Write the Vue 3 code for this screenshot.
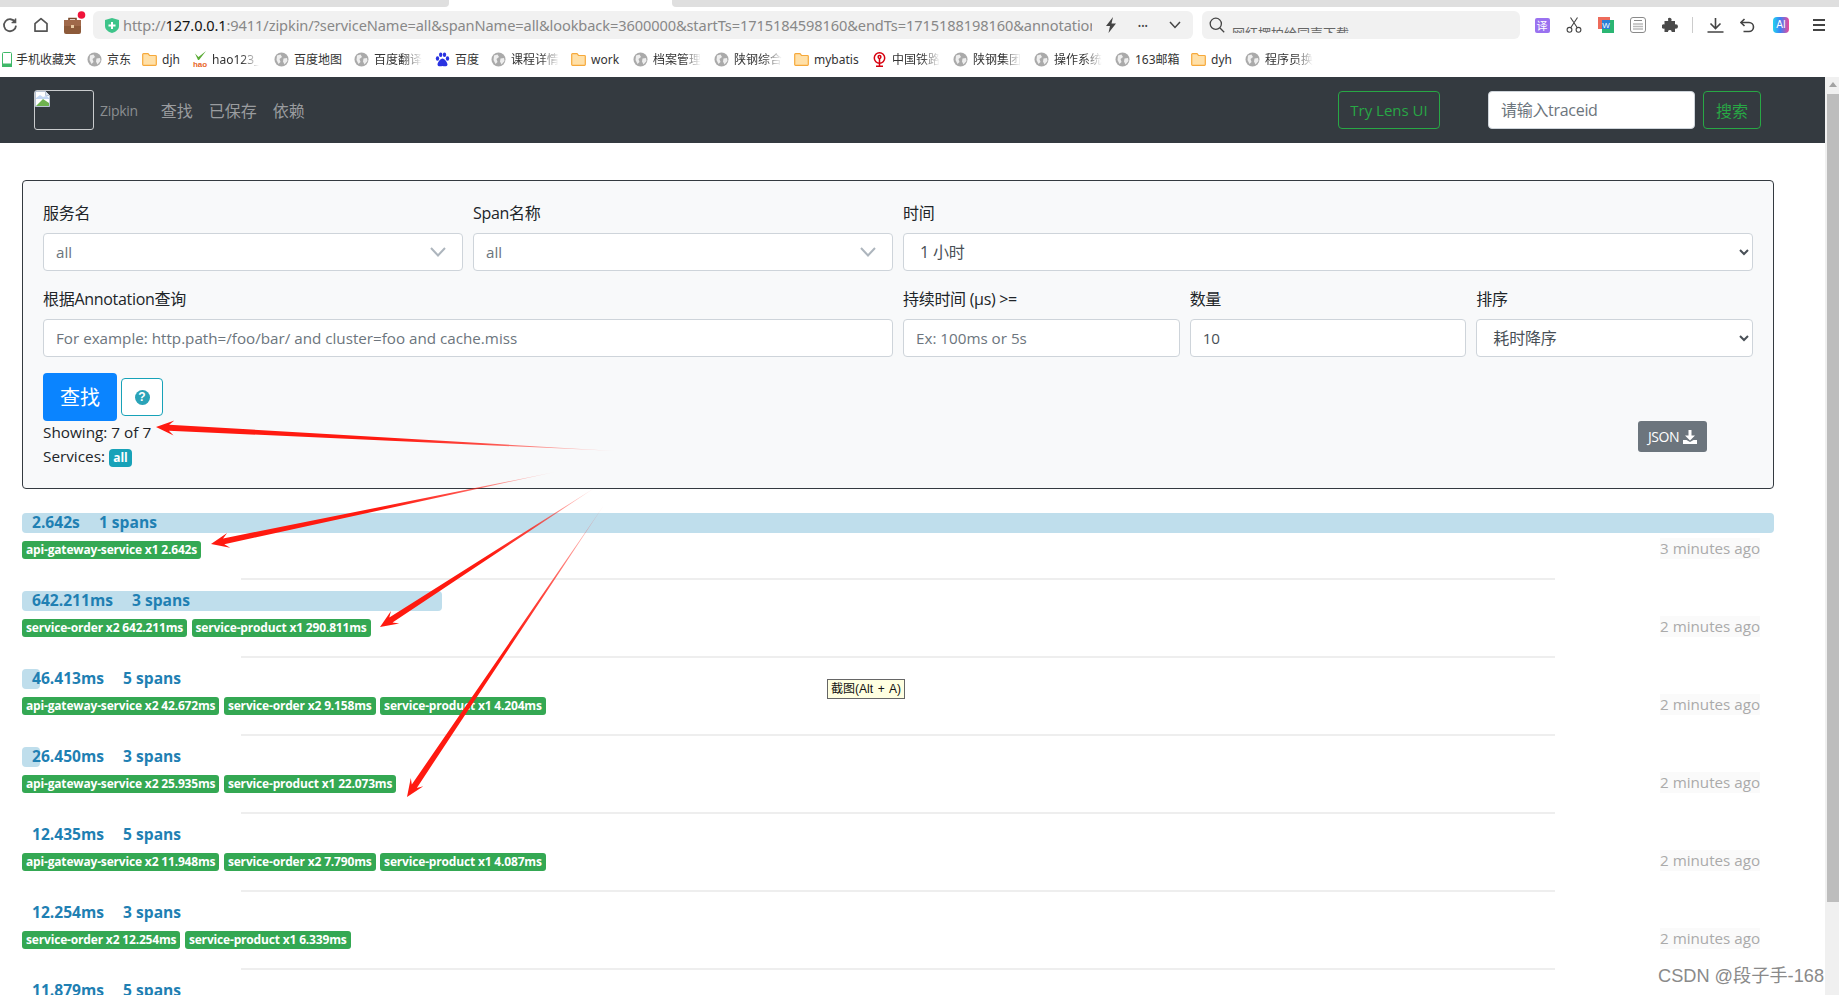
<script setup>
const bookmarks = [
  { icon: 'phone', text: '手机收藏夹', w: 85 },
  { icon: 'globe', text: '京东', w: 55 },
  { icon: 'folder', text: 'djh', w: 50 },
  { icon: 'hao', text: 'hao123_', w: 82, fade: true },
  { icon: 'globe', text: '百度地图', w: 80 },
  { icon: 'globe', text: '百度翻译', w: 81, fade: true },
  { icon: 'paw', text: '百度', w: 56 },
  { icon: 'globe', text: '课程详情', w: 80, fade: true },
  { icon: 'folder', text: 'work', w: 62 },
  { icon: 'globe', text: '档案管理', w: 81, fade: true },
  { icon: 'globe', text: '陕钢综合', w: 80, fade: true },
  { icon: 'folder', text: 'mybatis', w: 78 },
  { icon: 'rail', text: '中国铁路', w: 81, fade: true },
  { icon: 'globe', text: '陕钢集团', w: 81, fade: true },
  { icon: 'globe', text: '操作系统', w: 81, fade: true },
  { icon: 'globe', text: '163邮箱', w: 76 },
  { icon: 'folder', text: 'dyh', w: 54 },
  { icon: 'globe', text: '程序员换', w: 81, fade: true }
]

const traces = [
  { dur: '2.642s', spans: '1 spans', width: 100, ago: '3 minutes ago', tags: ['api-gateway-service x1 2.642s'] },
  { dur: '642.211ms', spans: '3 spans', width: 24, ago: '2 minutes ago', tags: ['service-order x2 642.211ms', 'service-product x1 290.811ms'] },
  { dur: '46.413ms', spans: '5 spans', width: 1, ago: '2 minutes ago', tags: ['api-gateway-service x2 42.672ms', 'service-order x2 9.158ms', 'service-product x1 4.204ms'] },
  { dur: '26.450ms', spans: '3 spans', width: 1, ago: '2 minutes ago', tags: ['api-gateway-service x2 25.935ms', 'service-product x1 22.073ms'] },
  { dur: '12.435ms', spans: '5 spans', width: 0, ago: '2 minutes ago', tags: ['api-gateway-service x2 11.948ms', 'service-order x2 7.790ms', 'service-product x1 4.087ms'] },
  { dur: '12.254ms', spans: '3 spans', width: 0, ago: '2 minutes ago', tags: ['service-order x2 12.254ms', 'service-product x1 6.339ms'] },
  { dur: '11.879ms', spans: '5 spans', width: 0, ago: '2 minutes ago', tags: [] }
]

function arrow(id, tx, ty, hx, hy) {
  const dx = hx - tx
  const dy = hy - ty
  const len = Math.hypot(dx, dy)
  const ux = dx / len
  const uy = dy / len
  const px = -uy
  const py = ux
  const at = (back, side) => `${(hx - ux * back + px * side).toFixed(1)},${(hy - uy * back + py * side).toFixed(1)}`
  return {
    id,
    tx, ty, hx, hy,
    points: [`${tx},${ty}`, at(13, -3), at(18, -7.5), `${hx},${hy}`, at(18, 7.5), at(13, 3)].join(' ')
  }
}

const arrows = [
  arrow('a1', 616, 451, 156, 427),
  arrow('a2', 555, 472, 211, 544),
  arrow('a3', 596, 487, 380, 627),
  arrow('a4', 604, 505, 407, 797)
]
</script>

<template>
  <div class="screen">
    <div class="tabstrip">
      <div class="tab-off tab-left"></div>
      <div class="tab-on"></div>
      <div class="tab-off tab-right"></div>
    </div>

    <div class="toolbar">
      <span class="tool t-reload">
        <svg width="16" height="16" viewBox="0 0 16 16" fill="none" stroke="#555" stroke-width="1.8"><path d="M13.2 5.2A6 6 0 1 0 14 8.6"/><path d="M13.6 1.6v4h-4" stroke-width="1.4" fill="#555"/></svg>
      </span>
      <span class="tool t-home">
        <svg width="16" height="16" viewBox="0 0 16 16" fill="none" stroke="#555" stroke-width="1.7" stroke-linejoin="round"><path d="M8 1.6 14 6.6V14.2H2V6.6Z"/></svg>
      </span>
      <span class="tool t-bag">
        <svg width="24" height="28" viewBox="0 0 24 28"><path d="M6 11V8.5h7V11" fill="none" stroke="#7b4a2c" stroke-width="1.6"/><rect x="1" y="10" width="17" height="14" rx="2" fill="#8d5a3a"/><rect x="1" y="10" width="17" height="6" fill="#a0694a"/><rect x="8" y="15" width="3" height="3" fill="#e9c9a2"/><circle cx="18.5" cy="5" r="3.8" fill="#f0133a"/></svg>
      </span>
      <div class="urlbar">
        <svg class="shield" width="14" height="15" viewBox="0 0 14 15"><path d="M7 0 14 2v6c0 3.5-3 5.800-7 7-4-1.200-7-3.500-7-7V2Z" fill="#3ec48a"/><path d="M7 4v7M3.500 7.500h7" stroke="#fff" stroke-width="2"/></svg>
        <div class="url"><span class="url-dim">http://</span><span class="url-host">127.0.0.1</span><span class="url-dim">:9411/zipkin/?serviceName=all&amp;spanName=all&amp;lookback=3600000&amp;startTs=1715184598160&amp;endTs=1715188198160&amp;annotatior</span></div>
        <svg class="bolt" width="12" height="16" viewBox="0 0 12 16"><path d="M8 0 1 9h4L3.500 16 11 6.500H6.500Z" fill="#444"/></svg>
        <span class="dots">•••</span>
        <svg class="caret" width="12" height="8" viewBox="0 0 12 8" fill="none" stroke="#444" stroke-width="1.500"><path d="M1 1l5 5.500L11 1"/></svg>
      </div>
      <div class="searchbar">
        <svg width="16" height="16" viewBox="0 0 16 16" fill="none" stroke="#444" stroke-width="1.300"><circle cx="6.800" cy="6.800" r="5.600"/><path d="M11 11l4.200 4.200"/></svg>
        <div class="search-text">网红摆拍给同声下载</div>
      </div>
      <div class="tool-right">
        <span class="tool32"><span class="yi">译</span></span>
        <span class="tool32">
          <svg width="16" height="16" viewBox="0 0 16 16" fill="none" stroke="#444" stroke-width="1.100"><circle cx="3.500" cy="12.800" r="2.400"/><circle cx="12.500" cy="12.800" r="2.400"/><path d="M4.700 10.800 11.500 .5M11.300 10.800 4.500 .5"/></svg>
        </span>
        <span class="tool32">
          <svg width="16" height="16" viewBox="0 0 16 16"><rect x="0" y="0" width="12" height="12" fill="#ed6b5b"/><rect x="4" y="3" width="12" height="13" fill="#2bb673"/><rect x="4" y="3" width="8" height="9" fill="#2a7fd6"/><text x="8" y="10.500" text-anchor="middle" font-size="8" font-family="Liberation Sans" fill="#fff">W</text></svg>
        </span>
        <span class="tool32">
          <svg width="16" height="16" viewBox="0 0 16 16" fill="none" stroke="#8a8a8a"><rect x=".5" y=".5" width="15" height="15" rx="2.500" fill="#fff"/><path d="M4 3.500h8" stroke-width="1"/><path d="M3 7h10M3 9.500h10M3 12h10" stroke="#bbb" stroke-width="1.500"/></svg>
        </span>
        <span class="tool32">
          <svg width="16" height="16" viewBox="0 0 16 16"><path d="M6 1.500a2 2 0 0 1 3.500 1.800L9.300 4H13v3.500l.7-.3a2.200 2.200 0 0 1 0 4.600L13 11.500V15H9.500l.2-.8a2 2 0 0 0-3.700 0l.2.800H2.500v-3.500l-.6.300a2.300 2.300 0 0 1 0-4.600l.6.300V4H6.200Z" fill="#4a4a4a"/></svg>
        </span>
        <span class="divider"></span>
        <span class="tool32">
          <svg width="17" height="16" viewBox="0 0 17 16" fill="none" stroke="#444" stroke-width="1.600"><path d="M8.500 1v10M3.500 6.500l5 5 5-5M.5 15h16"/></svg>
        </span>
        <span class="tool32">
          <svg width="15" height="15" viewBox="0 0 15 15" fill="none" stroke="#444" stroke-width="1.600"><path d="M4.500 1 1 4.500 4.500 8"/><path d="M1 4.500h8a4.500 4.500 0 0 1 0 9H3.500"/></svg>
        </span>
        <span class="tool32 ai-slot"><span class="ai">AI</span></span>
        <span class="tool32 menu-slot"><span class="menu"><i></i><i></i><i></i></span></span>
      </div>
    </div>

    <div class="bookmarks">
      <div v-for="b in bookmarks" :key="b.text" class="bm" :style="{ width: b.w + 'px' }">
        <svg v-if="b.icon === 'globe'" class="bm-ico" width="15" height="15" viewBox="0 0 15 15"><circle cx="7.500" cy="7.500" r="7" fill="#aaa"/><path d="M3 3.500 6.500 2.500 8 5 5.500 7 6.500 10 4.500 12 2.500 8ZM9.500 6.500 13 6 13.500 9 10.500 12.500 9 9.500Z" fill="#eee"/></svg>
        <svg v-else-if="b.icon === 'folder'" class="bm-ico" width="15" height="13" viewBox="0 0 15 13"><path d="M.7 1.500A.8.8 0 0 1 1.500.7H6L7.500 2.500h6a.8.8 0 0 1 .8.800v8.200a.8.8 0 0 1-.8.800h-12a.8.8 0 0 1-.8-.8Z" fill="#ffe0a8" stroke="#f6a93b" stroke-width="1.200"/></svg>
        <svg v-else-if="b.icon === 'phone'" class="bm-ico bm-phone" width="10" height="15" viewBox="0 0 10 15"><rect x=".5" y=".5" width="9" height="14" rx="1" fill="#fff" stroke="#3fb868"/><rect x="0" y="11.500" width="10" height="3.500" fill="#3fb868"/></svg>
        <svg v-else-if="b.icon === 'hao'" class="bm-ico bm-hao" width="16" height="16" viewBox="0 0 16 16"><path d="M3 2.500 6.500 6 14 0 7 9 6 9Z" fill="#5aab35"/><text x="8" y="15.500" text-anchor="middle" font-size="8" font-family="Liberation Sans" font-weight="700" fill="#e8672a">hao</text></svg>
        <svg v-else-if="b.icon === 'paw'" class="bm-ico" width="15" height="15" viewBox="0 0 15 15" fill="#2932e1"><ellipse cx="2.500" cy="6.500" rx="1.700" ry="2.200"/><ellipse cx="5.700" cy="2.800" rx="1.700" ry="2.300"/><ellipse cx="9.500" cy="2.800" rx="1.700" ry="2.300"/><ellipse cx="12.500" cy="6.500" rx="1.700" ry="2.200"/><path d="M7.500 6.500c2 0 5 4 5 6 0 2-2.500 2-5 1.500-2.500.5-5 .5-5-1.500 0-2 3-6 5-6Z"/></svg>
        <svg v-else class="bm-ico" width="15" height="15" viewBox="0 0 15 15" fill="none" stroke="#d7000f" stroke-width="1.500"><circle cx="7.500" cy="6" r="5.200"/><circle cx="7.500" cy="5" r="1.400"/><path d="M7.500 6v8M4 14.200h7"/></svg>
        <span class="bm-text" :class="{ fade: b.fade }">{{ b.text }}</span>
      </div>
    </div>

    <div class="viewport">
      <div class="page">
        <nav class="navbar">
          <div class="logo">
            <svg width="16" height="16" viewBox="0 0 16 16"><path d="M.5.500h10l4 4v11H.5Z" fill="#fff" stroke="#b9c4d4"/><path d="M10.500.500v4h4" fill="#dfe6ef" stroke="#b9c4d4"/><path d="M1 7l4-3 3 2 3-1v-1l3 3v1H1Z" fill="#c3d7f3"/><path d="M1 15 8 8l6 4v3Z" fill="#6eb24f"/></svg>
          </div>
          <span class="brand">Zipkin</span>
          <a class="nav-link">查找</a>
          <a class="nav-link">已保存</a>
          <a class="nav-link">依赖</a>
          <div class="nav-right">
            <button class="btn-green lens">Try Lens UI</button>
            <input class="trace-input" placeholder="请输入traceid" />
            <button class="btn-green go">搜索</button>
          </div>
        </nav>

        <main class="content">
          <section class="panel">
            <div class="form-grid">
              <div class="field s3">
                <label>服务名</label>
                <div class="pick"><span>all</span><svg width="16" height="10" viewBox="0 0 16 10" fill="none" stroke="#adb5bd" stroke-width="2"><path d="M1 1l7 7.500L15 1"/></svg></div>
              </div>
              <div class="field s3">
                <label>Span名称</label>
                <div class="pick"><span>all</span><svg width="16" height="10" viewBox="0 0 16 10" fill="none" stroke="#adb5bd" stroke-width="2"><path d="M1 1l7 7.500L15 1"/></svg></div>
              </div>
              <div class="field s6">
                <label>时间</label>
                <select class="ctl sel"><option>1 小时</option></select>
              </div>
              <div class="field s6">
                <label>根据Annotation查询</label>
                <input class="ctl" placeholder="For example: http.path=/foo/bar/ and cluster=foo and cache.miss" />
              </div>
              <div class="field s2">
                <label>持续时间 (μs) &gt;=</label>
                <input class="ctl" placeholder="Ex: 100ms or 5s" />
              </div>
              <div class="field s2">
                <label>数量</label>
                <input class="ctl" value="10" />
              </div>
              <div class="field s2">
                <label>排序</label>
                <select class="ctl sel"><option>耗时降序</option></select>
              </div>
            </div>

            <div class="actions">
              <button class="btn-find">查找</button>
              <button class="btn-help"><span class="help-dot">?</span></button>
            </div>

            <div class="summary">
              <div class="sum-text">
                <div class="sum-line">Showing: 7 of 7</div>
                <div class="sum-line">Services: <span class="badge-all">all</span></div>
              </div>
              <button class="btn-json">
                JSON
                <svg width="14" height="14" viewBox="0 0 14 14" fill="#fff"><path d="M5.500 0h3v5.500H12L7 10.500 2 5.500h3.500Z"/><path d="M0 10h3.500L7 12l3.500-2H14v4H0Z"/></svg>
              </button>
            </div>
          </section>

          <section class="traces">
            <article v-for="t in traces" :key="t.dur" class="trace">
              <div class="bar">
                <div class="fill" :style="{ width: t.width + '%' }"></div>
                <span class="dur">{{ t.dur }}</span>
                <span class="spans">{{ t.spans }}</span>
              </div>
              <div class="info">
                <div class="tags">
                  <span v-for="tag in t.tags" :key="tag" class="tag">{{ tag }}</span>
                </div>
                <span class="ago">{{ t.ago }}</span>
              </div>
              <hr class="sep" />
            </article>
          </section>
        </main>
      </div>
      <aside class="scrollbar">
        <div class="sb-up"></div>
        <div class="sb-thumb"></div>
      </aside>
    </div>

    <div class="shot-tip">截图(Alt + A)</div>
    <div class="watermark">CSDN @段子手-168</div>

    <svg class="arrows" width="1839" height="995" viewBox="0 0 1839 995">
      <defs>
        <linearGradient v-for="a in arrows" :id="a.id" :key="a.id" gradientUnits="userSpaceOnUse" :x1="a.tx" :y1="a.ty" :x2="a.hx" :y2="a.hy">
          <stop offset="0" stop-color="#ff1a10" stop-opacity="0.1" />
          <stop offset="0.3" stop-color="#ff1a10" stop-opacity="0.8" />
          <stop offset="0.5" stop-color="#ff1a10" />
          <stop offset="1" stop-color="#ff1a10" />
        </linearGradient>
      </defs>
      <polygon v-for="a in arrows" :key="a.id + 'p'" :points="a.points" :fill="`url(#${a.id})`" />
    </svg>
  </div>
</template>

<style>
html, body { margin: 0; padding: 0; overflow: hidden; background: #fff; }
</style>

<style scoped>
.screen {
  position: relative;
  width: 1839px;
  height: 995px;
  overflow: hidden;
  background: #fff;
  color: #212529;
  font-family: "Open Sans", "Noto Sans CJK SC", sans-serif;
  font-size: 16px;
  display: flex;
  flex-direction: column;
}

/* browser chrome */
.tabstrip { height: 7px; display: flex; }
.tab-off { background: #dfdfdf; }
.tab-left { width: 449px; border-bottom-right-radius: 4px; }
.tab-on { width: 223px; background: #fff; }
.tab-right { flex: 1; border-bottom-left-radius: 4px; }

.toolbar { height: 38px; display: flex; align-items: center; padding-bottom: 6px; padding-top: 4px; box-sizing: border-box; flex: none; }
.tool { display: flex; align-items: center; justify-content: center; flex: none; }
.t-reload { width: 18px; margin-left: 1px; }
.t-home { width: 32px; margin-left: 6px; }
.t-bag { width: 24px; margin-left: 6px; margin-top: -3px; margin-right: 6px; justify-content: flex-start; }
.urlbar {
  width: 1100px; height: 28px; margin-left: 0; flex: none;
  background: #f1f1f1; border-radius: 6px;
  display: flex; align-items: center;
  padding: 0 12px;
  box-sizing: border-box;
}
.shield { flex: none; }
.url {
  width: 970px; margin-left: 4px; overflow: hidden; white-space: nowrap;
  font-family: "Noto Sans", sans-serif; font-size: 14.6px; letter-spacing: -0.1px;
}
.url-dim { color: #888; }
.url-host { color: #111; }
.bolt { flex: none; margin-left: 13px; }
.dots { font-size: 9px; letter-spacing: 0; margin-left: 21px; color: #444; line-height: 1; }
.caret { flex: none; margin-left: 21px; }

.searchbar {
  width: 318px; height: 28px; margin-left: 9px; flex: none;
  background: #f1f1f1; border-radius: 6px; box-sizing: border-box;
  padding-left: 7px;
  display: flex; align-items: center; gap: 7px;
}
.search-text {
  align-self: flex-start; margin-top: 16px; height: 6px; overflow: hidden;
  font-size: 13px; line-height: 13px; color: #666; white-space: nowrap;
}
.tool-right { display: flex; align-items: center; margin-left: 6px; }
.tool32 { width: 32px; height: 24px; display: flex; align-items: center; justify-content: center; flex: none; }
.yi {
  width: 15px; height: 15px; background: #9a72f0; border-radius: 2px; color: #fff;
  font-size: 11px; line-height: 15px; text-align: center;
}
.divider { width: 1px; height: 16px; background: #ccc; margin: 0 6px; flex: none; }
.ai-slot { margin-left: 2px; }
.ai {
  width: 16px; height: 16px; border-radius: 4px; color: #fff; font-size: 10px; line-height: 16px; text-align: center;
  background: linear-gradient(90deg, #22d3ee, #3b82f6 45%, #ec4899);
  font-family: "Liberation Sans", sans-serif;
}
.menu-slot { margin-left: 6px; }
.menu { display: flex; flex-direction: column; gap: 3px; width: 12px; }
.menu i { display: block; height: 2px; background: #444; }

.bookmarks { height: 32px; display: flex; align-items: center; padding: 0 0 4px 2px; box-sizing: border-box; flex: none; }
.bm { display: flex; align-items: center; gap: 5px; flex: none; font-size: 12px; color: #333; font-family: "Noto Sans", "Noto Sans CJK SC", sans-serif; white-space: nowrap; overflow: hidden; }
.bm-ico { flex: none; }
.bm-phone { margin-right: -1px; }
.bm-hao { margin-right: -1px; }
.fade { -webkit-mask-image: linear-gradient(90deg, #000 62%, transparent 100%); mask-image: linear-gradient(90deg, #000 62%, transparent 100%); }

/* page */
.viewport { flex: 1; display: flex; min-height: 0; }
.page { flex: 1; min-width: 0; }
.scrollbar { width: 14px; background: #f0f0f0; flex: none; }
.sb-up { height: 17px; position: relative; }
.sb-up::after {
  content: ""; position: absolute; left: 4px; top: 5px;
  border-left: 4px solid transparent; border-right: 4px solid transparent; border-bottom: 5px solid #a3a3a3;
}
.sb-thumb { height: 808px; margin-left: 2px; background: #bdbdbd; }

.navbar {
  height: 66px; background: #343a40; display: flex; align-items: center;
  padding-left: 34px; padding-right: 64px; box-sizing: border-box;
}
.logo {
  width: 60px; height: 40px; box-sizing: border-box; border: 1px solid #c9cbcd; border-radius: 3px;
  flex: none; display: flex; align-items: flex-start; margin-right: 6px;
  margin-top: -1px;
}
.brand { font-size: 14px; color: #8b8e91; margin-right: 15px; letter-spacing: -0.3px; }
.nav-link { color: #9a9c9f; padding: 0 8px; font-size: 16px; margin-top: -1px; }
.nav-right { margin-left: auto; display: flex; align-items: center; }
.btn-green {
  height: 38px; box-sizing: border-box; background: transparent;
  border: 1px solid #28a745; border-radius: 4px; color: #28a745;
  font-family: inherit; font-size: 16px; padding: 0;
}
.lens { width: 102px; margin-right: 48px; font-size: 15px; }
.go { width: 58px; margin-left: 8px; }
.trace-input {
  width: 207px; height: 38px; box-sizing: border-box; border: 1px solid #ced4da; border-radius: 4px;
  padding: 0 12px; font-family: inherit; font-size: 16px; background: #fff; letter-spacing: -0.3px;
}
.trace-input::placeholder, .ctl::placeholder { color: #6c757d; opacity: 1; }

.content { padding: 37px 51px 0 22px; }
.panel {
  background: #f8f9fa; border: 1px solid #343a40; border-radius: 4px; padding: 20px; box-sizing: border-box;
  height: 309px;
}
.form-grid { display: grid; grid-template-columns: repeat(12, 1fr); column-gap: 10px; row-gap: 16px; }
.s2 { grid-column: span 2; }
.s3 { grid-column: span 3; }
.s6 { grid-column: span 6; }
.field { min-width: 0; }
.field label { display: block; font-size: 16px; letter-spacing: -0.3px; line-height: 24px; margin-bottom: 8px; color: #212529; }
.pick, .ctl {
  height: 38px; box-sizing: border-box; width: 100%; background: #fff;
  border: 1px solid #ced4da; border-radius: 4px; font-family: inherit; font-size: 15.2px; color: #495057;
}
.pick { display: flex; align-items: center; justify-content: space-between; padding: 0 16px 0 12px; color: #6c757d; }
.ctl { padding: 0 12px; display: block; }
.sel { padding: 0 12px; font-size: 16px; letter-spacing: -0.2px; }

.actions { display: flex; align-items: center; gap: 4px; margin-top: 16px; height: 48px; }
.btn-find {
  width: 74px; height: 48px; background: #0a84ff; color: #fff; border: 0; border-radius: 4px;
  font-family: inherit; font-size: 20px; padding: 0 0 2px;
}
.btn-help {
  width: 42px; height: 38px; background: #fff; border: 1px solid #17a2b8; border-radius: 4px; padding: 0;
  display: flex; align-items: center; justify-content: center;
}
.help-dot {
  width: 15px; height: 15px; border-radius: 50%; background: #2aa3b8; color: #fff;
  font-family: "Liberation Sans", sans-serif; font-weight: 700; font-size: 12px; line-height: 15px; text-align: center;
}
.summary { display: flex; justify-content: space-between; align-items: flex-start; padding-right: 46px; }
.sum-text { margin-top: -1px; }
.sum-line { line-height: 24px; font-size: 15.3px; }
.badge-all {
  display: inline-block; width: 23px; height: 18px; background: #17a2b8; color: #fff; border-radius: 4px;
  text-align: center; font-size: 12px; font-weight: 700; line-height: 18px; vertical-align: 0;
}
.btn-json {
  width: 69px; height: 31px; background: #6c757d; color: #fff; border: 0; border-radius: 3px; padding: 0;
  font-family: inherit; font-size: 14px; letter-spacing: -0.5px; display: flex; align-items: center; justify-content: center; gap: 4px;
}

.traces { margin-top: 24px; }
.trace { height: 78px; }
.bar { position: relative; height: 20px; box-sizing: border-box; padding: 0 0 1px 10px; display: flex; align-items: center; }
.fill { position: absolute; left: 0; top: 0; bottom: 0; min-width: 0; background: #bfdeec; border-radius: 4px; }
.dur, .spans { position: relative; font-size: 15.6px; font-weight: 700; color: #1f80b3; line-height: 19px; }
.spans { margin-left: 19px; }
.info { display: flex; justify-content: space-between; align-items: flex-end; margin-top: 5px; height: 21px; padding-right: 14px; }
.tags { display: flex; gap: 4.5px; }
.tag {
  height: 18px; box-sizing: border-box; padding: 0 4px; border-radius: 3px; background: #34a853; color: #fff;
  font-size: 12px; font-weight: 700; line-height: 18px; white-space: nowrap; letter-spacing: -0.17px;
}
.ago { height: 21px; width: 100px; background: #fafafa; color: #aaa; font-size: 15.2px; line-height: 21px; white-space: nowrap; }
.sep { width: 75%; margin: 19px auto 0; border: 0; height: 2px; background: #eee; }

.shot-tip {
  position: absolute; left: 827px; top: 679px; width: 78px; height: 20px; box-sizing: border-box;
  border: 1px solid #666; background: #ffffe1; color: #111; font-size: 12px; line-height: 18px; text-align: center; white-space: nowrap; word-spacing: 1.5px;
  font-family: "Liberation Sans", "Noto Sans CJK SC", sans-serif;
}
.watermark {
  position: absolute; left: 1658px; top: 964px; color: #8a8a8a; font-size: 18.2px; line-height: 24px; white-space: nowrap;
  font-family: "Liberation Sans", "Noto Sans CJK SC", sans-serif;
}
.arrows { position: absolute; left: 0; top: 0; pointer-events: none; }
</style>
